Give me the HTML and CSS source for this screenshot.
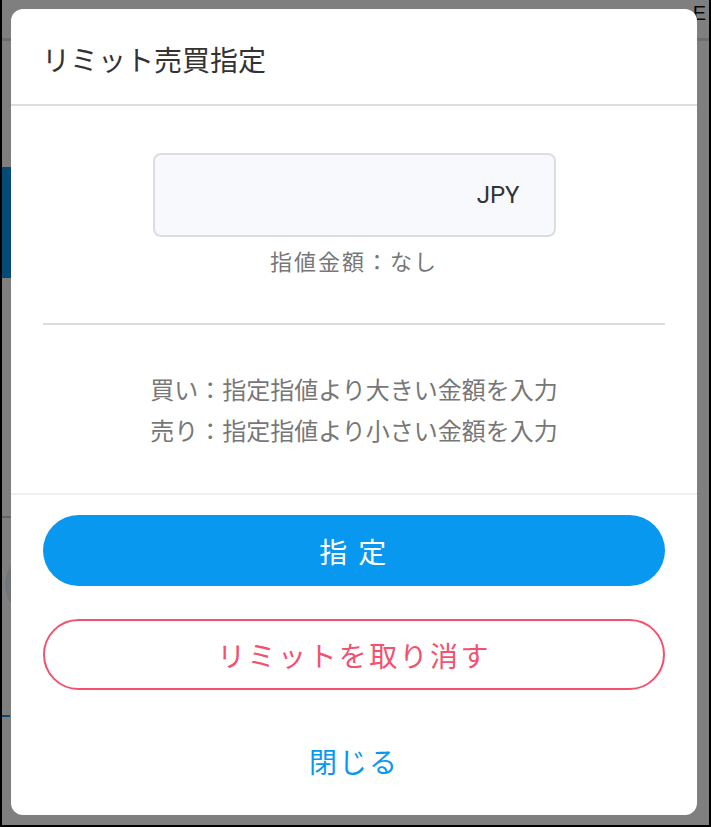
FILE: index.html
```html
<!DOCTYPE html>
<html lang="ja">
<head>
    <meta charset="UTF-8">
    <meta name="viewport" content="width=device-width, initial-scale=1.0">
    <title>リミット売買指定</title>
    <link rel="stylesheet" href="styles.css">
</head>
<body>
    <div class="screen">
        <!-- page behind the dialog -->
        <div class="page">
            <div class="page-header">
                <span class="page-mark">E</span>
            </div>
            <div class="page-tab"></div>
            <div class="page-rule"></div>
            <div class="page-chip"></div>
            <div class="page-tick"></div>
        </div>

        <div class="overlay">
            <div class="modal">
                <div class="modal-header">
                    <h2 class="modal-title">リミット売買指定</h2>
                </div>

                <div class="modal-body">
                    <div class="price-field">
                        <span class="price-unit">JPY</span>
                    </div>
                    <p class="price-note">指値金額：なし</p>

                    <div class="divider"></div>

                    <div class="instructions">
                        <p>買い：指定指値より大きい金額を入力</p>
                        <p>売り：指定指値より小さい金額を入力</p>
                    </div>
                </div>

                <div class="modal-footer">
                    <button class="btn btn-primary">指 定</button>
                    <button class="btn btn-danger">リミットを取り消す</button>
                    <a class="close-link" href="#">閉じる</a>
                </div>
            </div>
        </div>
    </div>
</body>
</html>
```

FILE: styles.css
```css
* {
    box-sizing: border-box;
}
html, body {
    margin: 0;
    padding: 0;
}
body {
    font-family: "Noto Sans CJK JP", "Noto Sans", sans-serif;
    background-color: #000;
}
.screen {
    position: relative;
    width: 711px;
    height: 827px;
    border: 2px solid #000;
    border-top: 0;
    background-color: #fff;
    overflow: hidden;
}

/* page under the overlay */
.page {
    display: flex;
    flex-direction: column;
}
.page-header {
    height: 41px;
    border-bottom: 3px solid #dcdcdc;
    display: flex;
    justify-content: flex-end;
    padding: 3px 3px 0 0;
}
.page-mark {
    font-family: "Liberation Sans", sans-serif;
    font-size: 20px;
    line-height: 20px;
    color: #111;
}
.page-tab {
    margin-top: 126px;
    width: 200px;
    height: 111px;
    background-color: #0898ef;
}
.page-rule {
    margin-top: 238px;
    height: 2px;
    width: 300px;
    background-color: #c8c8c8;
}
.page-chip {
    margin-top: 34px;
    margin-left: 3px;
    width: 160px;
    height: 65px;
    border-radius: 32px;
    background-color: #e4ebf2;
}
.page-tick {
    margin-top: 98px;
    width: 8px;
    height: 2px;
    background-color: #0898ef;
}

/* dialog */
.overlay {
    position: absolute;
    inset: 0;
    display: flex;
    padding: 9px 12px 10px 9px;
    background-color: rgba(0, 0, 0, 0.5);
}
.modal {
    flex: 1;
    display: flex;
    flex-direction: column;
    background-color: #fff;
    border-radius: 12px;
    overflow: hidden;
}
.modal-header {
    height: 97px;
    padding: 5px 31px 0;
    display: flex;
    align-items: center;
    border-bottom: 2px solid #dcdde1;
}
.modal-title {
    margin: 0;
    font-size: 28px;
    font-weight: 400;
    color: #333;
}
.modal-body {
    padding: 47px 32px 43px;
}
.price-field {
    width: 403px;
    height: 84px;
    margin: 0 auto;
    display: flex;
    align-items: center;
    justify-content: flex-end;
    padding-right: 34px;
    border: 2px solid #dcdde1;
    border-radius: 8px;
    background-color: #f8f9fc;
}
.price-unit {
    font-family: Roboto, "Noto Sans", sans-serif;
    font-size: 24px;
    color: #333;
}
.price-note {
    margin: 8px 0 0;
    font-size: 22px;
    letter-spacing: 2px;
    line-height: 30px;
    text-align: center;
    color: #777;
}
.divider {
    margin-top: 48px;
    height: 2px;
    background-color: #dcdde1;
}
.instructions {
    margin-top: 43px;
    text-align: center;
    color: #777;
    font-size: 24px;
    line-height: 41px;
}
.instructions p {
    margin: 0;
}
.modal-footer {
    display: flex;
    flex-direction: column;
    padding: 20px 32px 29px;
    border-top: 2px solid #efefef;
}
.btn {
    height: 71px;
    border-radius: 36px;
    font-family: inherit;
    font-size: 28px;
    letter-spacing: 2.4px;
    cursor: pointer;
}
.btn-primary {
    border: none;
    background-color: #0898ef;
    color: #fff;
    padding-left: 6px;
}
.btn-danger {
    margin-top: 33px;
    border: 2px solid #f4516f;
    background-color: #fff;
    color: #f4516f;
}
.close-link {
    margin-top: 46px;
    height: 50px;
    display: flex;
    align-items: center;
    justify-content: center;
    font-size: 28px;
    letter-spacing: 2px;
    color: #0898ef;
    text-decoration: none;
}
```
